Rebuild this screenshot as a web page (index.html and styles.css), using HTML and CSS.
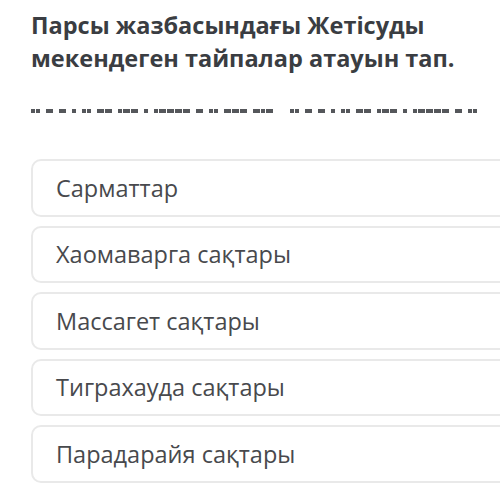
FILE: index.html
```html
<!DOCTYPE html>
<html lang="kk">
<head>
  <meta charset="UTF-8">
  <title>Тест</title>
  <link rel="stylesheet" href="styles.css">
</head>
<body>
  <div id="question">
    <h1 class="title">Парсы жазбасындағы Жетісуды мекендеген тайпалар атауын тап.</h1>

    <div class="mask">
      <span class="w"><i class="s"></i><i class="s"></i></span>
      <span class="w"><i class="m"></i></span>
      <span class="w"><i class="m"></i></span>
      <span class="w"><i class="s"></i></span>
      <span class="w"><i class="s"></i><i class="s"></i></span>
      <span class="w"><i class="m"></i><i class="m"></i></span>
      <span class="w"><i class="s"></i><i class="m"></i><i class="m"></i></span>
      <span class="w"><i class="s"></i></span>
      <span class="w"><i class="s"></i><i class="m"></i><i class="m"></i><i class="m"></i><i class="m"></i></span>
      <span class="w"><i class="m"></i></span>
      <span class="w"><i class="s"></i><i class="s"></i></span>
      <span class="w"><i class="m"></i><i class="m"></i><i class="m"></i></span>
      <span class="w"><i class="m"></i><i class="s"></i><i class="m"></i></span>
      <span class="w big"><i class="s"></i><i class="s"></i></span>
      <span class="w"><i class="m"></i></span>
      <span class="w"><i class="m"></i></span>
      <span class="w"><i class="s"></i></span>
      <span class="w"><i class="s"></i><i class="s"></i></span>
      <span class="w"><i class="m"></i><i class="m"></i></span>
      <span class="w"><i class="s"></i><i class="m"></i><i class="m"></i></span>
      <span class="w"><i class="s"></i></span>
      <span class="w"><i class="s"></i><i class="m"></i><i class="m"></i><i class="m"></i><i class="m"></i></span>
      <span class="w"><i class="m"></i></span>
      <span class="w"><i class="s"></i><i class="s"></i></span>
    </div>

    <div class="options">
      <div class="opt">Сарматтар</div>
      <div class="opt">Хаомаварга сақтары</div>
      <div class="opt">Массагет сақтары</div>
      <div class="opt">Тиграхауда сақтары</div>
      <div class="opt">Парадарайя сақтары</div>
    </div>
  </div>
</body>
</html>
```

FILE: styles.css
```css
body {
  margin: 0;
  background: #ffffff;
  font-family: "Open Sans", "Noto Sans", sans-serif;
  overflow: hidden;
}
#question {
  padding-left: 31px;
}
.title {
  margin: 9px 0 0 0;
  font-size: 23.5px;
  line-height: 33px;
  font-weight: 700;
  color: #3a3d42;
  max-width: 440px;
}
.mask {
  display: flex;
  gap: 6px;
  margin-top: 34px;
  height: 4px;
  white-space: nowrap;
}
.w {
  display: flex;
  gap: 1px;
}
.w.big {
  margin-left: 11px;
}
.w i {
  display: block;
  height: 4px;
  background: #55575b;
}
.w i.s {
  width: 4px;
}
.w i.m {
  width: 7px;
}
.options {
  display: flex;
  flex-direction: column;
  gap: 9px;
  margin-top: 46px;
}
.opt {
  width: 520px;
  height: 53.5px;
  display: flex;
  align-items: center;
  padding-left: 23px;
  border: 2px solid #e9e9e9;
  border-radius: 10px;
  font-size: 23.5px;
  color: #48494d;
  box-sizing: content-box;
}
```
